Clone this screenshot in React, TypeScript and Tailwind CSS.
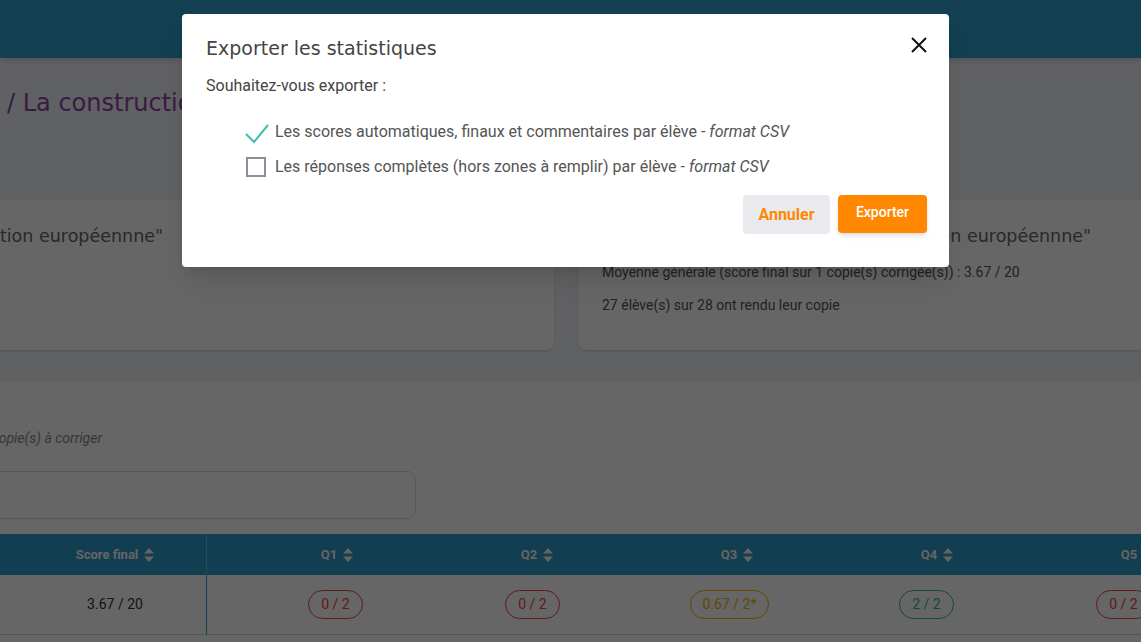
import React from "react";

const roboto = { fontFamily: "Roboto, 'Liberation Sans', sans-serif" };
const round = { fontFamily: "'DejaVu Sans', 'Noto Sans', sans-serif" };

const SortIcon = () => (
  <svg width="10" height="14" viewBox="0 0 10 14" className="shrink-0">
    <path d="M5 0 L10 5.5 L0 5.5 Z" fill="currentColor" />
    <path d="M5 14 L10 8.5 L0 8.5 Z" fill="currentColor" />
  </svg>
);

const Badge = ({ label, tone }: { label: string; tone: "red" | "gold" | "green" }) => {
  const cls =
    tone === "red"
      ? "border-[#f24141] text-[#f24141]"
      : tone === "gold"
      ? "border-[#f2b400] text-[#f2b400]"
      : "border-[#2cb5a5] text-[#2cb5a5]";
  return (
    <span className={`inline-flex h-[29px] items-center rounded-full border px-[12px] text-[14px] ${cls}`}>
      {label}
    </span>
  );
};

const questions = [
  { q: "Q1", score: "0 / 2", tone: "red" as const },
  { q: "Q2", score: "0 / 2", tone: "red" as const },
  { q: "Q3", score: "0.67 / 2*", tone: "gold" as const },
  { q: "Q4", score: "2 / 2", tone: "green" as const },
  { q: "Q5", score: "0 / 2", tone: "red" as const },
];

const StatsCard = ({ withStats }: { withStats: boolean }) => (
  <div className="h-[150px] rounded-lg bg-white px-6 pt-6 shadow-sm">
    <h3 className="whitespace-nowrap text-[17.5px] leading-[24px] text-[#666]" style={round}>
      Statistiques de l'activité "La construction européennne"
    </h3>
    {withStats && (
      <>
        <p className="mt-[14px] text-[14px] leading-[20px] text-[#555]">
          Moyenne générale (score final sur 1 copie(s) corrigée(s)) : 3.67 / 20
        </p>
        <p className="mt-[13px] text-[14px] leading-[20px] text-[#555]">
          27 élève(s) sur 28 ont rendu leur copie
        </p>
      </>
    )}
  </div>
);

export default function App() {
  return (
    <div className="relative h-[642px] w-[1141px] overflow-hidden bg-[#f0f2f5]" style={roboto}>
      {/* page behind the dialog */}
      <header className="h-[58px] bg-[#2f9dcd] shadow-md" />

      <h1 className="mt-[29px] whitespace-nowrap pl-[7px] text-[24px] leading-[32px] text-[#8e44ad]" style={round}>
        / La construction de l'Union européennne
      </h1>

      <div className="ml-[-350px] mt-[81px] grid w-[1832px] grid-cols-2 gap-6">
        <StatsCard withStats={false} />
        <StatsCard withStats />
      </div>

      <section className="mt-[32px] h-[300px] bg-white">
        <div className="flex w-[102px] justify-end pt-[46px]">
          <span className="whitespace-nowrap text-[14px] italic leading-[20px] text-[#888]">
            1 copie(s) à corriger
          </span>
        </div>
        <div className="ml-[-10px] mt-[23px] h-[48px] w-[426px] rounded-lg border border-[#dcdcdc]" />

        <div className="mt-[15px] flex h-[41px] items-center bg-[#2b9bcb] text-[13px] font-bold text-[#fafafa]">
          <div className="flex h-full w-[206px] shrink-0 items-center justify-center gap-[6px] pl-[24px]">
            Score final <SortIcon />
          </div>
          <div className="flex h-full border-l border-[#5fb6dc]">
            {questions.map((c) => (
              <div key={c.q} className="flex w-[200px] shrink-0 items-center justify-center gap-[6px] pl-[60px]">
                {c.q} <SortIcon />
              </div>
            ))}
          </div>
        </div>
        <div className="flex h-[60px] items-center border-b border-[#d0d0d0] text-[14px] text-[#333]">
          <div className="flex h-full w-[206px] shrink-0 items-center justify-center pl-[24px]">3.67 / 20</div>
          <div className="flex h-full border-l border-[#2b9bcb]">
            {questions.map((c) => (
              <div key={c.q} className="flex w-[197px] shrink-0 items-center justify-center pl-[60px]">
                <Badge label={c.score} tone={c.tone} />
              </div>
            ))}
          </div>
        </div>
      </section>

      {/* dialog */}
      <div className="absolute inset-0 bg-black/60">
        <div className="ml-[182px] mt-[14px] w-[767px] rounded bg-white pb-[33px] pl-6 pr-[22px] pt-5 shadow-xl">
          <div className="flex items-start justify-between">
            <h2 className="text-[19px] leading-[28px] text-[#444]" style={round}>
              Exporter les statistiques
            </h2>
            <svg width="16" height="16" viewBox="0 0 16 16" className="mt-[3px]">
              <path d="M1 1 L15 15 M15 1 L1 15" stroke="#111" strokeWidth="2" />
            </svg>
          </div>
          <p className="mt-[14px] text-[16px] leading-[20px] text-[#444]">Souhaitez-vous exporter :</p>

          <div className="mt-6 pl-10 text-[16px] text-[#555]">
            <label className="flex h-6 items-center gap-[9px]">
              <svg width="20" height="24" viewBox="0 0 20 24" className="shrink-0 overflow-visible">
                <path d="M0 14 L8 22 L22 5" fill="none" stroke="#3dbfae" strokeWidth="2" />
              </svg>
              <span>
                Les scores automatiques, finaux et commentaires par élève - <em>format CSV</em>
              </span>
            </label>
            <label className="mt-[11px] flex h-6 items-center gap-[9px]">
              <span className="h-5 w-5 shrink-0 border-2 border-[#8a8f9a]" />
              <span>
                Les réponses complètes (hors zones à remplir) par élève - <em>format CSV</em>
              </span>
            </label>
          </div>

          <div className="mt-4 flex justify-end gap-2">
            <button className="h-[39px] w-[87px] rounded bg-[#e9eaee] text-[16px] font-bold text-[#ff8800]">
              Annuler
            </button>
            <button className="h-[38px] w-[89px] rounded bg-[#ff8800] pb-1 text-[14px] font-medium text-white shadow-md">
              Exporter
            </button>
          </div>
        </div>
      </div>
    </div>
  );
}
